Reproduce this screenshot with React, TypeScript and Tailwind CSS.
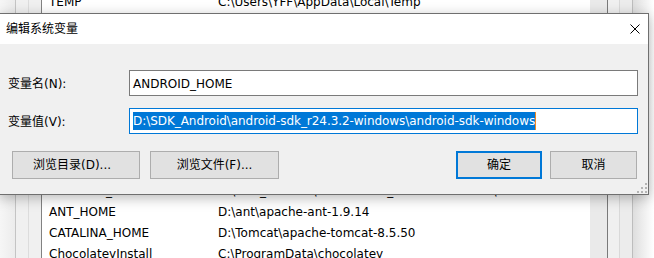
import React from "react";

const rows: [string, string][] = [
  ["TEMP", "C:\\Users\\YFF\\AppData\\Local\\Temp"],
  ["", ""],
  ["", ""],
  ["", ""],
  ["", ""],
  ["", ""],
  ["", ""],
  ["", ""],
  ["", ""],
  ["ANDROID_HOME", "D:\\SDK_Android\\android-sdk_r24.3.2-windows\\android-sdk-windows"],
  ["ANT_HOME", "D:\\ant\\apache-ant-1.9.14"],
  ["CATALINA_HOME", "D:\\Tomcat\\apache-tomcat-8.5.50"],
  ["ChocolateyInstall", "C:\\ProgramData\\chocolatey"],
];

function CloseIcon() {
  return (
    <svg width="10" height="10" viewBox="0 0 10 10" className="block">
      <path d="M0.5 0.5 L9.5 9.5 M9.5 0.5 L0.5 9.5" stroke="#000" strokeWidth="1" fill="none" />
    </svg>
  );
}

function Grip() {
  return (
    <svg width="10" height="10" viewBox="0 0 10 10" className="block">
      <rect x="8" y="0" width="2" height="2" fill="#b4b4b4" />
      <rect x="4" y="4" width="2" height="2" fill="#b4b4b4" />
      <rect x="8" y="4" width="2" height="2" fill="#b4b4b4" />
      <rect x="0" y="8" width="2" height="2" fill="#b4b4b4" />
      <rect x="4" y="8" width="2" height="2" fill="#b4b4b4" />
      <rect x="8" y="8" width="2" height="2" fill="#b4b4b4" />
    </svg>
  );
}

export default function App() {
  return (
    <div className="relative w-[654px] h-[258px] overflow-hidden bg-white text-[12px] text-black font-['DejaVu_Sans','Noto_Sans_CJK_SC',sans-serif]">
      {/* background window */}
      <div className="flex h-full">
        <div className="w-[15px] shrink-0 bg-gradient-to-r from-[#f6f6f6] to-[#ececec]" />
        <div className="w-[13px] shrink-0 border-l border-[#c4c4c4] bg-[#f0f0f0]" />
        <div className="w-[13px] shrink-0 border-l border-[#dcdcdc] bg-[#f0f0f0]" />
        <div className="flex-1 min-w-0 border-l border-[#828282] bg-white overflow-hidden">
          <div className="-mt-[9px] flex flex-col">
            {rows.map(([n, v], i) => (
              <div key={i} className="flex h-[21px] items-center whitespace-nowrap">
                <div className="w-[176px] shrink-0 pl-[7px]">{n}</div>
                <div>{v}</div>
              </div>
            ))}
          </div>
        </div>
        <div className="w-[17px] shrink-0 bg-[#eaeaea]" />
        <div className="w-[12px] shrink-0 border-l border-[#7a7a7a] bg-[#f0f0f0]" />
        <div className="w-[14px] shrink-0 border-l border-[#d9d9d9] border-r border-r-[#bdbdbd] bg-[#ececec]" />
        <div className="w-[21px] shrink-0 bg-gradient-to-r from-[#dedede] to-white" />
      </div>

      {/* dialog */}
      <div className="absolute left-[-1px] top-[13px] w-[650px] h-[182px] border border-[#6f6f6f] bg-[#f0f0f0] shadow-[0_3px_12px_rgba(0,0,0,0.28)] flex flex-col">
        <div className="h-[30px] bg-white flex items-center justify-between pl-[6px] pr-[8px]">
          <span>编辑系统变量</span>
          <CloseIcon />
        </div>
        <div className="relative flex-1 flex flex-col pt-[26px] pb-[15px]">
          <div className="flex items-center pl-[8px] pr-[10px]">
            <div className="w-[121px] pt-[1px]">变量名(N):</div>
            <div className="flex-1 h-[26px] border border-[#7a7a7a] bg-white flex items-center pl-[3px] pt-[1px] whitespace-nowrap">
              ANDROID_HOME
            </div>
          </div>
          <div className="flex items-center pl-[8px] pr-[10px] mt-[12px]">
            <div className="w-[121px] pt-[1px]">变量值(V):</div>
            <div className="flex-1 h-[26px] border border-[#0078d7] bg-white flex items-center pl-[3px] whitespace-nowrap">
              <span className="h-[18px] leading-[18px] bg-[#0078d7] text-white tracking-[-0.05px]">
                D:\SDK_Android\android-sdk_r24.3.2-windows\android-sdk-windows
              </span>
              <span className="w-px h-[18px] bg-[#f08a24]" />
            </div>
          </div>
          <div className="flex items-center mt-[17px] pl-[12px] pr-[11px]">
            <button className="w-[128px] h-[28px] border border-[#adadad] bg-[#e1e1e1] flex items-center justify-center pr-[8px]">
              浏览目录(D)...
            </button>
            <button className="ml-[10px] w-[129px] h-[28px] border border-[#adadad] bg-[#e1e1e1] flex items-center justify-center">
              浏览文件(F)...
            </button>
            <div className="flex-1" />
            <button className="w-[86px] h-[28px] border-2 border-[#0078d7] bg-[#e1e1e1] flex items-center justify-center">
              确定
            </button>
            <button className="ml-[8px] w-[87px] h-[28px] border border-[#adadad] bg-[#e1e1e1] flex items-center justify-center">
              取消
            </button>
          </div>
          <div className="absolute right-[1px] bottom-[1px]">
            <Grip />
          </div>
        </div>
      </div>
    </div>
  );
}
